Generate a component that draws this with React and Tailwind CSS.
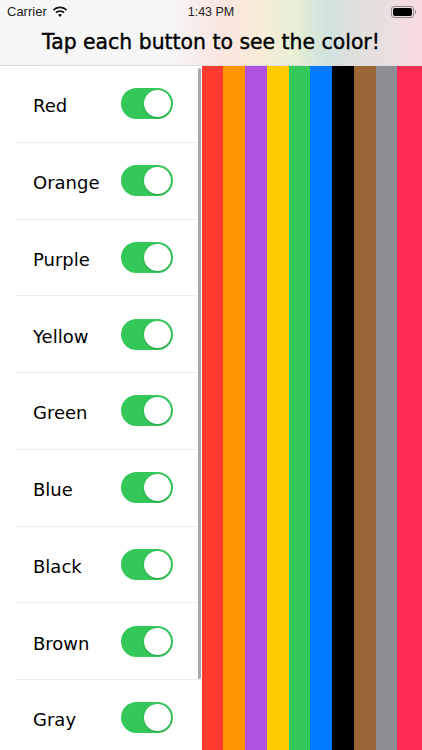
const colors = ["Red", "Orange", "Purple", "Yellow", "Green", "Blue", "Black", "Brown", "Gray"];

const stripes = [
  "bg-[#ff3b30]",
  "bg-[#ff9500]",
  "bg-[#af52de]",
  "bg-[#ffcc00]",
  "bg-[#34c759]",
  "bg-[#007aff]",
  "bg-[#000000]",
  "bg-[#9b6636]",
  "bg-[#8e8e93]",
];

const Toggle = () => (
  <div className="flex h-[31px] w-[52px] items-center justify-end rounded-full bg-[#34c759] pr-[2px]">
    <div className="h-[27px] w-[27px] rounded-full bg-white shadow-[0_1px_2px_rgba(0,0,0,0.2)]" />
  </div>
);

const Wifi = () => (
  <svg width="16" height="12" viewBox="0 0 16 12" fill="#111">
    <path d="M8 2.3c2.3 0 4.4.9 6 2.4l1.1-1.2C13.2 1.7 10.7.6 8 .6S2.8 1.7.9 3.5L2 4.7c1.6-1.5 3.7-2.4 6-2.4z" />
    <path d="M8 6c1.3 0 2.500.5 3.400 1.300l1.200-1.200C11.400 5 9.800 4.300 8 4.300S4.600 5 3.400 6.100l1.200 1.200C5.500 6.500 6.700 6 8 6z" />
    <path d="M8 7.900c-.8 0-1.500.3-2 .8L8 11l2-2.300c-.5-.5-1.200-.8-2-.8z" />
  </svg>
);

const Battery = () => (
  <div className="flex items-center gap-[1px]">
    <div className="flex h-[12px] w-[23px] items-center rounded-[3px] border border-[#8a8a8a] p-[1px]">
      <div className="h-full w-full rounded-[2px] bg-black" />
    </div>
    <div className="h-[4px] w-[1px] rounded-r bg-[#8a8a8a]" />
  </div>
);

export default function App() {
  return (
    <div className="flex h-[750px] w-[422px] flex-col overflow-hidden bg-white">
      <div className="h-[66px] shrink-0 border-b border-[#dcdcdc] bg-[linear-gradient(90deg,#f7f7f8_0%,#f7f6f7_40%,#f9e6e0_52%,#f8ecd8_62%,#e6efd6_70%,#cfe2de_78%,#dfdfdc_84%,#e8e0e0_90%,#f9dbe2_100%)]">
        <div className="relative flex h-[22px] items-center justify-between pl-[7px] pr-[6px] pt-[1px] font-['Liberation_Sans',sans-serif] text-[13px] text-[#222]">
          <div className="flex items-center gap-[5px]">
            <span>Carrier</span>
            <Wifi />
          </div>
          <span className="absolute left-0 right-0 top-[3px] text-center text-[12.500px]">1:43 PM</span>
          <Battery />
        </div>
        <div className="mt-[5px] text-center font-['DejaVu_Sans',sans-serif] text-[20.400px] leading-[30px] text-black [-webkit-text-stroke:0.4px_black]">
          Tap each button to see the color!
        </div>
      </div>

      <div className="flex min-h-0 flex-1">
        <div className="relative w-[201.700px] shrink-0 pl-[16px]">
          {colors.map((name) => (
            <div key={name} className="flex h-[76.750px] items-center justify-between border-b border-[#ebebeb] pl-[17px] pr-[29px]">
              <span className="pt-[4px] font-['DejaVu_Sans',sans-serif] text-[18px] text-black">{name}</span>
              <Toggle />
            </div>
          ))}
          <div className="absolute right-[1px] top-[2px] h-[611px] w-[3px] rounded-full bg-[#a8a8a8]" />
        </div>
        <div className="flex flex-1">
          {stripes.map((c) => (
            <div key={c} className={`w-[21.750px] shrink-0 ${c}`} />
          ))}
          <div className="flex-1 bg-[#ff2d55]" />
        </div>
      </div>
    </div>
  );
}
